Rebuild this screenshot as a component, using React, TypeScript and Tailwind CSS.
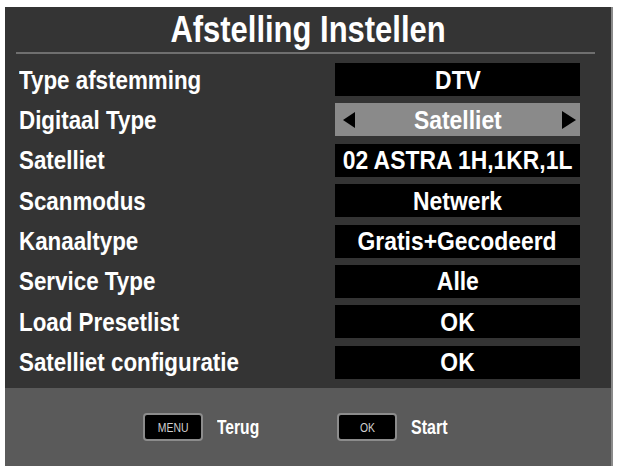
const rows = [
  { label: "Type afstemming", value: "DTV" },
  { label: "Digitaal Type", value: "Satelliet", selected: true },
  { label: "Satelliet", value: "02 ASTRA 1H,1KR,1L" },
  { label: "Scanmodus", value: "Netwerk" },
  { label: "Kanaaltype", value: "Gratis+Gecodeerd" },
  { label: "Service Type", value: "Alle" },
  { label: "Load Presetlist", value: "OK" },
  { label: "Satelliet configuratie", value: "OK" },
];

const font = { fontFamily: '"Liberation Sans", Arial, sans-serif' };

export default function App() {
  return (
    <div className="w-[621px] h-[470px] bg-white pt-[7px] pl-[5px]" style={font}>
      <div className="w-[608px] h-[459px] bg-[#343434] flex flex-col border-r-2 border-[#8a8a8a]">
        <div className="h-[45px] flex items-center justify-center">
          <h1 className="text-[36px] leading-none font-bold text-white scale-x-[0.86] whitespace-nowrap">Afstelling Instellen</h1>
        </div>
        <div className="h-[2px] bg-[#6f6f6f] ml-[11px] mr-[16px]" />
        <div className="flex flex-col gap-[7.4px] mt-[9px]">
          {rows.map((r) => (
            <div key={r.label} className="flex items-center h-[33px]">
              <div className="w-[330px] pl-[14px]">
                <div className="text-[26px] font-bold text-white leading-none scale-x-[0.86] origin-left whitespace-nowrap">{r.label}</div>
              </div>
              <div
                className={
                  "relative w-[245px] h-[33px] flex items-center justify-center " +
                  (r.selected ? "bg-[#8a8a8a]" : "bg-black")
                }
              >
                {r.selected && (
                  <svg className="absolute left-[8px] top-[9px]" width="12" height="16" viewBox="0 0 12 16">
                    <path d="M12 0 L0 8 L12 16 Z" fill="#000" />
                  </svg>
                )}
                <span className="whitespace-nowrap text-[26px] font-bold text-white leading-none scale-x-[0.88]">{r.value}</span>
                {r.selected && (
                  <svg className="absolute right-[4px] top-[8px]" width="14" height="18" viewBox="0 0 14 18">
                    <path d="M0 0 L14 9 L0 18 Z" fill="#000" />
                  </svg>
                )}
              </div>
            </div>
          ))}
        </div>
        <div className="mt-auto h-[78px] bg-[#5a5a5a] flex items-center pl-[138px]">
          <div className="w-[194px] flex items-center gap-[14px]">
            <div className="w-[60px] h-[28px] bg-black border-2 border-[#8c8c8c] rounded-[4px] flex items-center justify-center">
              <span className="text-[13px] text-[#d0d0d0] leading-none scale-x-[0.8]">MENU</span>
            </div>
            <span className="text-[20px] font-bold text-white leading-none scale-x-[0.78] origin-left">Terug</span>
          </div>
          <div className="flex items-center gap-[14px]">
            <div className="w-[60px] h-[28px] bg-black border-2 border-[#8c8c8c] rounded-[4px] flex items-center justify-center">
              <span className="text-[13px] text-[#d0d0d0] leading-none scale-x-[0.8]">OK</span>
            </div>
            <span className="text-[20px] font-bold text-white leading-none scale-x-[0.8] origin-left">Start</span>
          </div>
        </div>
      </div>
    </div>
  );
}
